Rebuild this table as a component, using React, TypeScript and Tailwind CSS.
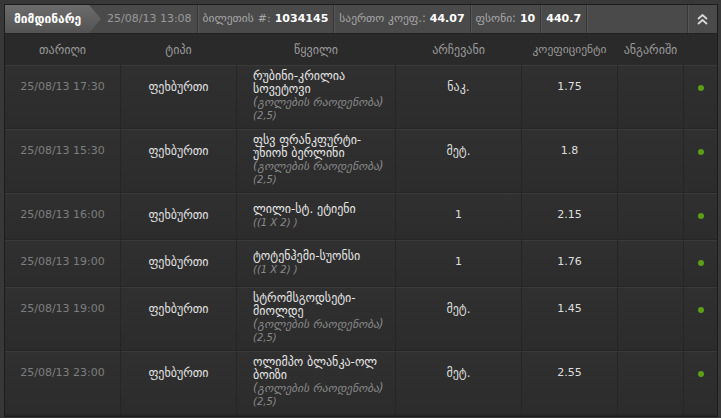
import React from "react";

type Row = {
  date: string;
  lines: string[];
  sub: string[];
  pick: string;
  odd: string;
};

const rows: Row[] = [
  { date: "25/08/13 17:30", lines: ["რუბინი-კრილია", "სოვეტოვი"], sub: ["(გოლების რაოდენობა)", "(2,5)"], pick: "ნაკ.", odd: "1.75" },
  { date: "25/08/13 15:30", lines: ["ფსვ ფრანკფურტი-", "უნიონ ბერლინი"], sub: ["(გოლების რაოდენობა)", "(2,5)"], pick: "მეტ.", odd: "1.8" },
  { date: "25/08/13 16:00", lines: ["ლილი-სტ. ეტიენი"], sub: ["((1 X 2) )"], pick: "1", odd: "2.15" },
  { date: "25/08/13 19:00", lines: ["ტოტენჰემი-სუონსი"], sub: ["((1 X 2) )"], pick: "1", odd: "1.76" },
  { date: "25/08/13 19:00", lines: ["სტრომსგოდსეტი-", "მიოლდე"], sub: ["(გოლების რაოდენობა)", "(2,5)"], pick: "მეტ.", odd: "1.45" },
  { date: "25/08/13 23:00", lines: ["ოლიმპო ბლანკა-ოლ", "ბოიზი"], sub: ["(გოლების რაოდენობა)", "(2,5)"], pick: "მეტ.", odd: "2.55" },
];

const isGeo = (s: string) => /[\u10A0-\u10FF]/.test(s);

const grid = "grid grid-cols-[115px_115px_158px_125px_95px_65px_33px] gap-x-px";
const cell = "border-t border-[#3b3b3b] bg-gradient-to-b from-[#303030] to-[#2c2c2c]";

function Seg({ children, grow }: { children?: React.ReactNode; grow?: boolean }) {
  return (
    <div className={`flex items-center px-[5px] border-r border-[#363636] shadow-[1px_0_0_#565656] ${grow ? "flex-1" : ""}`}>
      {children}
    </div>
  );
}

export default function App() {
  return (
    <div className="w-[721px] h-[418px] bg-[#383838] pt-[4px] pl-[4px] text-[11px]" style={{ fontFamily: "'DejaVu Sans', sans-serif" }}>
      <div className="w-[714px] border border-[#1c1c1c] bg-[#262626]">
        {/* top bar */}
        <div className="flex h-[29px] bg-[#4a4a4a] border-b border-[#222]">
          <div className="w-[96px] flex items-center pl-[9px] bg-gradient-to-b from-[#6c6c6c] to-[#535353] text-white font-bold text-[12px] [clip-path:polygon(0_0,84px_0,96px_50%,84px_100%,0_100%)]">
            მიმდინარე
          </div>
          <Seg>
            <span className="text-[#9a9a9a] text-[11px] pl-[1px]">25/08/13 13:08</span>
          </Seg>
          <Seg>
            <span className="text-[#a8a8a8] text-[11.5px]">ბილეთის</span>
            <span className="text-[#a8a8a8] ml-[4px]">#:</span>
            <span className="text-white font-bold ml-[4px]">1034145</span>
          </Seg>
          <Seg>
            <span className="text-[#a8a8a8] text-[11.5px]">საერთო კოეფ.:</span>
            <span className="text-white font-bold ml-[4px]">44.07</span>
          </Seg>
          <Seg>
            <span className="text-[#a8a8a8] text-[11.5px]">ფსონი:</span>
            <span className="text-white font-bold ml-[4px]">10</span>
          </Seg>
          <Seg>
            <span className="text-white font-bold">440.7</span>
          </Seg>
          <Seg grow />
          <div className="w-[29px] flex items-center justify-center">
            <svg width="11" height="11" viewBox="0 0 11 11" fill="none" stroke="#d8d8d8" strokeWidth="1.8">
              <polyline points="1,5 5.5,1 10,5" />
              <polyline points="1,10 5.5,6 10,10" />
            </svg>
          </div>
        </div>

        {/* column labels */}
        <div className={`${grid} h-[31px] bg-[#2a2a2a] text-[#9a9a9a] text-[12px] items-center text-center`}>
          <div>თარიღი</div>
          <div>ტიპი</div>
          <div>წყვილი</div>
          <div>არჩევანი</div>
          <div className="text-[11.5px]">კოეფიციენტი</div>
          <div>ანგარიში</div>
          <div></div>
        </div>

        {/* rows */}
        <div className="flex flex-col gap-y-px">
          {rows.map((r, i) => (
            <div key={i} className={`${grid} min-h-[46px]`}>
              <div className={`${cell} pt-[14px] text-center text-[#7e7e7e] leading-[14px]`}>{r.date}</div>
              <div className={`${cell} pt-[14px] text-center text-[#e2e2e2] leading-[14px] text-[12px]`}>ფეხბურთი</div>
              <div className={`${cell} flex flex-col justify-center pl-[16px] pt-[4px] pb-[6px]`}>
                {r.lines.map((l, j) => (
                  <div key={j} className="text-[#e6e6e6] leading-[13px] text-[12px]">{l}</div>
                ))}
                {r.sub.map((s, j) => (
                  <div key={j} className={`text-[#8a8a8a] italic leading-[13px] ${isGeo(s) ? "text-[11.5px]" : "text-[10px]"}`}>{s}</div>
                ))}
              </div>
              <div className={`${cell} pt-[14px] text-center text-[#dedede] leading-[14px] ${isGeo(r.pick) ? "text-[12px]" : "text-[11px]"}`}>{r.pick}</div>
              <div className={`${cell} pt-[14px] text-center text-[#dedede] leading-[14px]`}>{r.odd}</div>
              <div className={cell}></div>
              <div className={`${cell} flex justify-center pt-[19px]`}>
                <div className="w-[6px] h-[6px] rounded-full bg-[#5c9e18]"></div>
              </div>
            </div>
          ))}
          <div className="h-px"></div>
        </div>
      </div>
    </div>
  );
}
